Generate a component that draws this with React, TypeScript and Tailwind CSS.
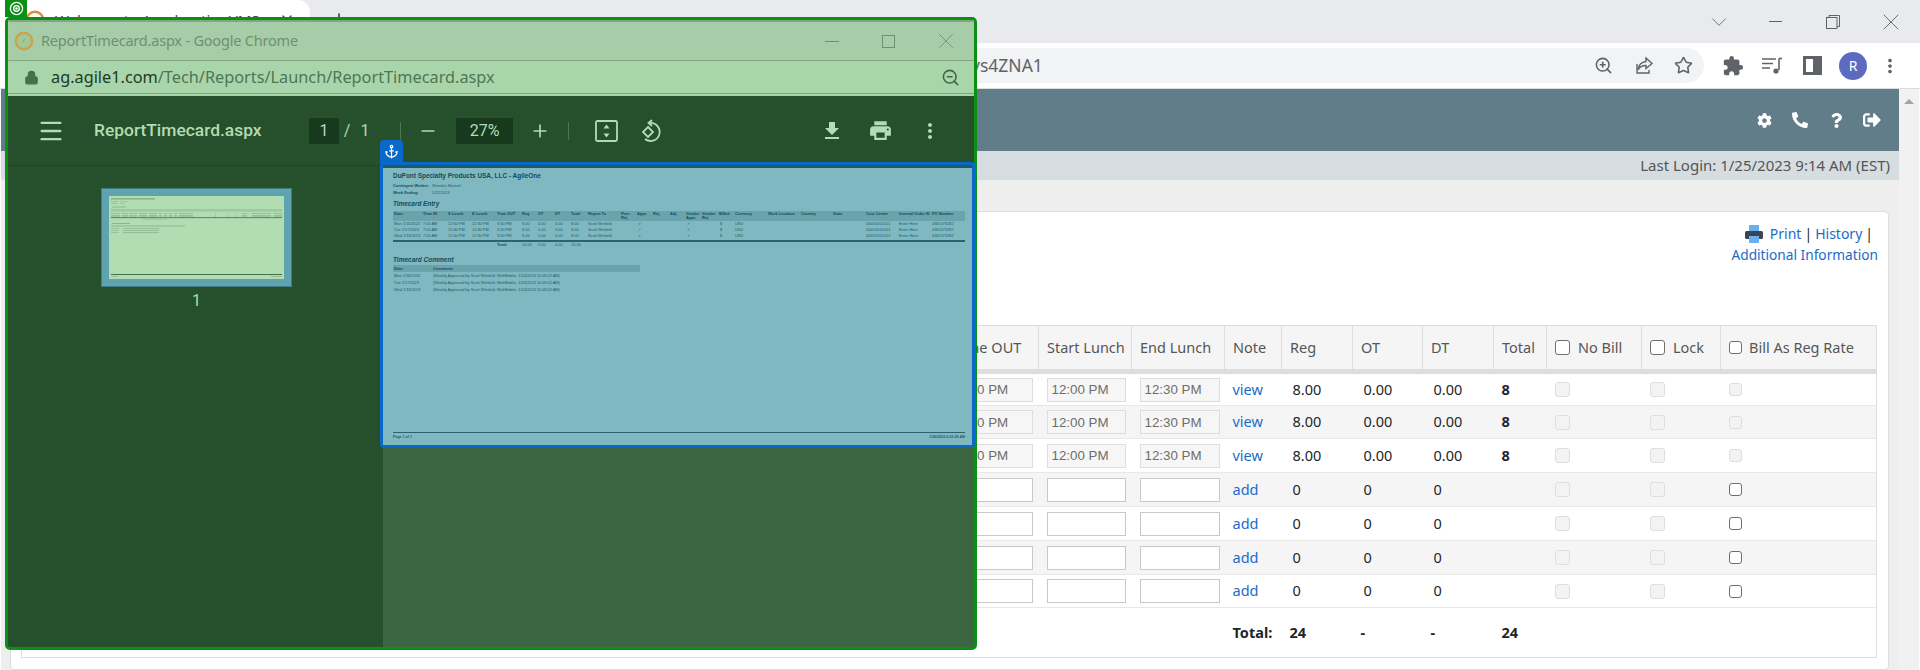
import { Anchor, Lock, Menu, Minus, Plus, Star, X, ZoomIn, ZoomOut, ChevronDown } from 'lucide-react'
import { FaCog, FaPhone, FaQuestion, FaSignOutAlt } from 'react-icons/fa'
import { MdExtension, MdFileDownload, MdMoreVert, MdPrint } from 'react-icons/md'

const rows = [
  { start: '12:00 PM', end: '12:30 PM', out: '3:30 PM', link: 'view', reg: '8.00', ot: '0.00', dt: '0.00', total: '8', locked: true, height: 'h-[34px]', bg: 'bg-white' },
  { start: '12:00 PM', end: '12:30 PM', out: '3:30 PM', link: 'view', reg: '8.00', ot: '0.00', dt: '0.00', total: '8', locked: true, height: 'h-[33px]', bg: 'bg-[#f5f5f5]' },
  { start: '12:00 PM', end: '12:30 PM', out: '3:30 PM', link: 'view', reg: '8.00', ot: '0.00', dt: '0.00', total: '8', locked: true, height: 'h-[34px]', bg: 'bg-white' },
  { start: '', end: '', out: '', link: 'add', reg: '0', ot: '0', dt: '0', total: '', locked: false, height: 'h-[34px]', bg: 'bg-[#f5f5f5]' },
  { start: '', end: '', out: '', link: 'add', reg: '0', ot: '0', dt: '0', total: '', locked: false, height: 'h-[34px]', bg: 'bg-white' },
  { start: '', end: '', out: '', link: 'add', reg: '0', ot: '0', dt: '0', total: '', locked: false, height: 'h-[34px]', bg: 'bg-[#f5f5f5]' },
  { start: '', end: '', out: '', link: 'add', reg: '0', ot: '0', dt: '0', total: '', locked: false, height: 'h-[33px]', bg: 'bg-white' },
]

const docCols = 'grid grid-cols-[29px_25px_24px_25px_25px_16px_17px_16px_17px_33px_16px_16px_17px_16px_16px_17px_16px_33px_33px_32px_33px_33px_33px_33px]'

const docHead = ['Date:', 'Time IN', 'S Lunch', 'E Lunch', 'Time OUT', 'Reg', 'OT', 'DT', 'Total', 'Report To', 'Prev. Rej.', 'Appr.', 'Rej.', 'Adj.', 'Vendor Appr.', 'Vendor Rej', 'Billed', 'Currency', 'Work Location', 'Country', 'State', 'Cost Center', 'Internal Order ID', 'PO Number']

const docRows = [
  { day: 'Mon 1/16/2023', height: 'h-[6px]' },
  { day: 'Tue 1/17/2023', height: 'h-[6px]' },
  { day: 'Wed 1/18/2023', height: 'h-[7px]' },
]

// x, width of the little text smudges in the thumbnail's table rows
const thumbCols = [
  [2, 9], [13, 6], [20, 8], [30, 8], [40, 8], [50, 3], [55, 3], [60, 3], [65, 3], [70, 14],
  [106, 1], [118, 1], [127, 1], [133, 5], [143, 11], [154, 8], [165, 8],
]

function TimeInput({ value, width, locked }: { value: string; width: string; locked: boolean }) {
  return (
    <input
      disabled={locked}
      defaultValue={value}
      className={`${width} h-6 block px-[4px] text-[13.33px] font-['Liberation_Sans',sans-serif] border ${
        locked ? 'bg-[#f6f6f6] border-[#dddddd] text-[#6d6d6d]' : 'bg-white border-[#c8c8c8]'
      }`}
    />
  )
}

function Check({ size, enabled }: { size: string; enabled?: boolean }) {
  return (
    <input
      type="checkbox"
      disabled={!enabled}
      className={`appearance-none block rounded-[3px] ${size} ${
        enabled ? 'bg-white border-[1.5px] border-[#6f6f6f]' : 'bg-[#f3f3f3] border-[1.5px] border-[#dedede]'
      }`}
    />
  )
}

function Thumbnail() {
  return (
    <svg viewBox="0 0 175 83" className="w-[175px] h-[83px] block bg-[#b2dcb2]">
      <rect x="2" y="2.4" width="44" height="1" fill="#6f9c76" />
      <rect x="2" y="5.2" width="7" height="0.8" fill="#93bd97" />
      <rect x="11" y="5.2" width="8" height="0.8" fill="#9ac49e" />
      <rect x="2" y="7.2" width="7" height="0.8" fill="#93bd97" />
      <rect x="11" y="7.2" width="5" height="0.8" fill="#9ac49e" />
      <rect x="3" y="10.5" width="14" height="1" fill="#8bb590" />
      <rect x="2" y="13" width="171" height="2.6" fill="#9fc9a3" />
      {[17, 19, 20.4].map((y) => (
        <g key={y}>
          {thumbCols.map(([x, w]) => (
            <rect key={x} x={x} y={y} width={w} height="0.8" fill="#8fb994" />
          ))}
        </g>
      ))}
      <rect x="2" y="21.3" width="171" height="0.8" fill="#3f7348" />
      <rect x="33" y="22.7" width="25" height="0.8" fill="#93bd97" />
      <rect x="3" y="27" width="18" height="1" fill="#8bb590" />
      <rect x="2" y="29" width="74" height="2" fill="#9fc9a3" />
      {[32, 34, 36].map((y) => (
        <g key={y}>
          <rect x="2" y={y} width="8" height="0.8" fill="#93bd97" />
          <rect x="14" y={y} width="36" height="0.8" fill="#8bb590" />
        </g>
      ))}
      <rect x="2" y="78" width="171" height="0.8" fill="#26592e" />
      <rect x="3" y="80" width="6" height="0.8" fill="#8bb590" />
      <rect x="162" y="80" width="11" height="0.8" fill="#8bb590" />
    </svg>
  )
}

function DocPage() {
  return (
    <div className="h-full bg-[#7fb8c0] pt-[5px] pl-[10px] pr-[7px] pb-[5px] flex flex-col font-['Liberation_Sans',sans-serif] text-[#225c68] text-[3.9px] leading-[6px]">
      <div className="h-[6px] text-[6.45px] font-bold text-[#134c59] whitespace-nowrap">DuPont Specialty Products USA, LLC - AgileOne</div>
      <div className="mt-[4px] flex h-[6.5px] items-center">
        <span className="w-[39px] font-bold text-[#134c59]">Contingent Worker:</span>
        <span>Shenikis Manuel</span>
      </div>
      <div className="flex h-[6.5px] items-center">
        <span className="w-[39px] font-bold text-[#134c59]">Week Ending:</span>
        <span>1/22/2023</span>
      </div>
      <div className="mt-[4px] h-[8px] leading-[8px] text-[6.4px] font-bold italic text-[#134c59]">Timecard Entry</div>
      <div className={`${docCols} mt-[2.5px] h-[10px] bg-[#6aa3ab] font-bold text-[#134c59] leading-[4px] pt-[1px] pl-px`}>
        {docHead.map((h) => (
          <span key={h}>{h}</span>
        ))}
      </div>
      {docRows.map((r) => (
        <div key={r.day} className={`${docCols} ${r.height} items-center pl-px whitespace-nowrap`}>
          <span>{r.day}</span>
          <span>7:00 AM</span>
          <span>12:00 PM</span>
          <span>12:30 PM</span>
          <span>3:30 PM</span>
          <span>8.00</span>
          <span>0.00</span>
          <span>0.00</span>
          <span>8.00</span>
          <span>Scott Winfield</span>
          <span />
          <span className="pl-[1px]">✓</span>
          <span />
          <span />
          <span className="pl-[1px]">✓</span>
          <span />
          <span className="pl-[1px]">$</span>
          <span>USD</span>
          <span />
          <span />
          <span />
          <span>00001010C01</span>
          <span>Enter Here</span>
          <span>4361073282</span>
        </div>
      ))}
      <div className={`${docCols} h-[6px] items-center pl-px border-t-2 border-[#2a626d] whitespace-nowrap`}>
        <span />
        <span />
        <span />
        <span />
        <span className="font-bold text-[#134c59]">Total:</span>
        <span>24.00</span>
        <span>0.00</span>
        <span>0.00</span>
        <span>24.00</span>
      </div>
      <div className="mt-[10px] h-[8px] leading-[8px] text-[6.5px] font-bold italic text-[#134c59]">Timecard Comment</div>
      <div className="mt-[1.5px] w-[247px] h-[7px] bg-[#6aa3ab] flex items-center pl-px font-bold text-[#134c59]">
        <span className="w-[39px]">Date:</span>
        <span>Comments</span>
      </div>
      {docRows.map((r) => (
        <div key={r.day} className="h-[7px] flex items-center pl-px whitespace-nowrap">
          <span className="w-[39px]">{r.day}</span>
          <span>(Weekly Approved by Scott Winfield, WebMobile, 1/24/2023 10:08:02 AM)</span>
        </div>
      ))}
      <div className="mt-auto border-t border-[#2a626d] pt-[1px] flex justify-between h-[8px] font-bold text-[3.6px]">
        <span>Page 1 of 1</span>
        <span>1/26/2023 6:22:28 AM</span>
      </div>
    </div>
  )
}

function ReportWindow() {
  return (
    <div className="absolute left-[5px] top-[17px] w-[972px] h-[633px] border-[3px] border-[#0b8f14] rounded-[5px] bg-[#264f2c] flex flex-col overflow-visible">
      <div className="h-[41px] shrink-0 bg-[#a6cda7] border-t-2 border-t-[#7fa880] border-b border-b-[#7fa880] border-l border-l-[#a6cda7] flex items-center pl-[5px] pr-[15px]">
        <svg viewBox="0 0 20 20" className="w-5 h-5 shrink-0">
          <circle cx="10" cy="10" r="8.2" fill="#a3c69a" stroke="#c8a44a" strokeWidth="2.4" />
          <path d="M11.5 7 L9.3 9.3 L9 12 Z" fill="#b98f3a" />
        </svg>
        <span className="ml-[7px] text-[14.5px] tracking-[-0.2px] text-[#6f9070]">ReportTimecard.aspx - Google Chrome</span>
        <div className="ml-auto flex items-center text-[#6c936f]">
          <div className="w-[14px] h-px bg-[#6c936f]" />
          <div className="ml-[43px] w-[13px] h-[13px] border border-[#6c936f]" />
          <X className="ml-[38px] w-[26px] h-[26px]" strokeWidth={0.8} />
        </div>
      </div>
      <div className="h-[33px] shrink-0 bg-[#a9d5ab] border-b border-[#7fa880] flex items-center pl-[16px] pr-[14px]">
        <Lock className="w-[15px] h-[17px] text-[#47704d] fill-[#47704d]" strokeWidth={2} />
        <span className="ml-[12px] text-[16.3px] text-[#1e3a22]">
          ag.agile1.com<span className="text-[#4f7555]">/Tech/Reports/Launch/ReportTimecard.aspx</span>
        </span>
        <ZoomOut className="ml-auto w-[19px] h-[19px] text-[#3f6645]" strokeWidth={2} />
      </div>
      <div className="h-[2px] shrink-0 bg-[#a9d5ab]" />
      <div className="h-[70px] shrink-0 bg-[#264f2c] border-b border-[#1f4425] flex items-center pl-[29px] pr-[38px] text-[#b2dcb2] font-['Roboto',sans-serif]">
        <Menu className="w-[28px] h-[28px] shrink-0" strokeWidth={2} />
        <span className="ml-[29px] w-[215px] shrink-0 text-[17.4px] font-medium">ReportTimecard.aspx</span>
        <span className="w-[30px] h-[26px] shrink-0 bg-[#173a1e] flex items-center justify-center text-base">1</span>
        <span className="w-4 text-center text-base">/</span>
        <span className="w-5 text-center text-base">1</span>
        <div className="ml-[25px] w-px h-[18px] bg-[#4c7552]" />
        <Minus className="ml-[17px] w-5 h-5" strokeWidth={2} />
        <span className="ml-[18px] w-[57px] h-[26px] shrink-0 bg-[#173a1e] flex items-center justify-center text-base">27%</span>
        <Plus className="ml-[17px] w-5 h-5" strokeWidth={2} />
        <div className="ml-[18px] w-px h-[18px] bg-[#4c7552]" />
        <svg viewBox="0 0 23 22" className="ml-[26px] w-[23px] h-[22px]" fill="none" stroke="currentColor" strokeWidth="1.8">
          <rect x="1" y="1" width="21" height="20" rx="1.5" />
          <path d="M11.5 4.5 L14.5 8.5 H8.5 Z M11.5 17.5 L8.5 13.5 H14.5 Z" fill="currentColor" stroke="none" />
        </svg>
        <svg viewBox="0 0 22 24" className="ml-[22px] w-[22px] h-6" fill="none" stroke="currentColor" strokeWidth="1.8">
          <path d="M10 4 A9 9 0 1 1 5 20" />
          <path d="M12 1 L8.5 4 L12 7" />
          <path d="M8 8 L13 13 L8 18 L3 13 Z" />
        </svg>
        <MdFileDownload className="ml-auto w-6 h-6 -mx-1" />
        <MdPrint className="ml-[28px] w-[25px] h-[25px] -mx-0.5" />
        <MdMoreVert className="ml-[27px] w-6 h-6 -mx-1.5" />
      </div>
      <div className="flex-1 flex min-h-0">
        <div className="w-[375px] shrink-0 flex flex-col items-center pt-[22px] pl-[2px]">
          <div className="w-[191px] p-[7px] bg-[#5fa3b0] border border-[#3f7f82]">
            <Thumbnail />
          </div>
          <span className="mt-[2px] text-[#b2dcb2] text-base font-['Roboto',sans-serif]">1</span>
        </div>
        <div className="flex-1 bg-[#3c6642]" />
      </div>
      {/* selected page highlight */}
      <div className="absolute left-[372px] top-[142px] w-[595px] h-[286px] border-[3px] border-[#0a68c8] rounded-[4px] bg-[#1f5a63] pt-[3px]">
        <DocPage />
        <div className="absolute -left-[3px] -top-[25px] w-[23px] h-[23px] bg-[#0a68c8] rounded-t-[4px] flex items-center justify-center">
          <Anchor className="w-[15px] h-[15px] text-white" strokeWidth={2} />
        </div>
      </div>
      <div className="absolute -left-[3px] -top-[20px] w-[22px] h-[17px] bg-[#0b8f14] flex items-center justify-center overflow-hidden">
        <svg viewBox="0 0 16 16" className="w-[15px] h-[15px]" fill="none" stroke="white" strokeWidth="1.4">
          <circle cx="8" cy="8" r="6.5" />
          <circle cx="8" cy="8" r="3" />
          <circle cx="8" cy="8" r="0.7" fill="white" />
        </svg>
      </div>
    </div>
  )
}

function TimecardTable() {
  const th = 'border border-[#dddddd] border-b-[5px] bg-[#f5f5f5] px-2 text-left font-normal text-[#555555]'
  const td = 'px-2 border-b border-[#e8e8e8]'
  return (
    <table className="table-fixed w-[1856px] border-collapse border border-[#dddddd] text-[14.5px] font-['Noto_Sans',sans-serif] text-[#212529]">
      <colgroup>
        <col />
        <col className="w-[93px]" />
        <col className="w-[93px]" />
        <col className="w-[93px]" />
        <col className="w-[57px]" />
        <col className="w-[71px]" />
        <col className="w-[70px]" />
        <col className="w-[71px]" />
        <col className="w-[53px]" />
        <col className="w-[95px]" />
        <col className="w-[79px]" />
        <col className="w-[156px]" />
      </colgroup>
      <thead>
        <tr className="h-[46px]">
          <th className={th}></th>
          <th className={th}>Time OUT</th>
          <th className={`${th} whitespace-nowrap`}>Start Lunch</th>
          <th className={`${th} whitespace-nowrap`}>End Lunch</th>
          <th className={th}>Note</th>
          <th className={th}>Reg</th>
          <th className={th}>OT</th>
          <th className={th}>DT</th>
          <th className={th}>Total</th>
          <th className={th}>
            <div className="flex items-center gap-2"><Check size="w-[15px] h-[15px]" enabled />No Bill</div>
          </th>
          <th className={th}>
            <div className="flex items-center gap-2"><Check size="w-[15px] h-[15px]" enabled />Lock</div>
          </th>
          <th className={th}>
            <div className="flex items-center gap-[7px] whitespace-nowrap"><Check size="w-[13px] h-[13px]" enabled />Bill As Reg Rate</div>
          </th>
        </tr>
      </thead>
      <tbody>
        {rows.map((row, i) => (
          <tr key={i} className={`${row.height} ${row.bg}`}>
            <td className={td}></td>
            <td className={`${td} pr-[6px]`}><TimeInput value={row.out} width="w-[79px]" locked={row.locked} /></td>
            <td className={`${td} pr-[6px]`}><TimeInput value={row.start} width="w-[79px]" locked={row.locked} /></td>
            <td className={`${td} pr-[4px]`}><TimeInput value={row.end} width="w-[80px]" locked={row.locked} /></td>
            <td className={td}><a className="text-[#1a6cc8]">{row.link}</a></td>
            <td className={`${td} pl-[11px]`}>{row.reg}</td>
            <td className={`${td} pl-[11px]`}>{row.ot}</td>
            <td className={`${td} pl-[11px]`}>{row.dt}</td>
            <td className={`${td} font-bold`}>{row.total}</td>
            <td className={td}><Check size="w-[15px] h-[15px]" /></td>
            <td className={td}><Check size="w-[15px] h-[15px]" /></td>
            <td className={`${td} pl-[8px]`}><Check size="w-[13px] h-[13px]" enabled={!row.locked} /></td>
          </tr>
        ))}
        <tr className="h-[50px] font-bold">
          <td colSpan={4}></td>
          <td className="px-2">Total:</td>
          <td className="px-2">24</td>
          <td className="px-2">-</td>
          <td className="px-2">-</td>
          <td className="px-2">24</td>
          <td colSpan={3}></td>
        </tr>
      </tbody>
    </table>
  )
}

export default function App() {
  return (
    <div className="relative w-[1920px] h-[670px] overflow-hidden bg-white flex flex-col font-['Noto_Sans',sans-serif]">
      {/* browser tab strip */}
      <div className="h-[43px] shrink-0 bg-[#e8eaed] flex">
        <div className="w-[310px] bg-white rounded-tr-xl flex items-center pl-[25px] pr-[15px] pb-[3px]">
          <svg viewBox="0 0 20 20" className="w-5 h-5 shrink-0">
            <circle cx="10" cy="10" r="8.2" fill="white" stroke="#e08a3c" strokeWidth="2.4" />
          </svg>
          <span className="ml-[10px] text-[15px] text-[#45474a] whitespace-nowrap">Welcome to AccelerationVMS</span>
          <X className="ml-auto w-4 h-4 text-[#45474a]" />
        </div>
        <Plus className="ml-[19px] mt-[10px] w-[20px] h-[20px] text-[#45474a]" />
        <div className="ml-auto flex items-center pr-[15px] text-[#5f6368]">
          <ChevronDown className="w-[26px] h-[26px]" strokeWidth={0.8} />
          <div className="ml-[37px] w-[13px] h-px bg-[#5f6368]" />
          <svg viewBox="0 0 14 14" className="ml-[44px] w-[14px] h-[14px]" fill="none" stroke="currentColor" strokeWidth="1">
            <rect x="0.5" y="2.5" width="10.5" height="11" />
            <path d="M3 2.5 V0.5 H13.5 V11.5 H11" />
          </svg>
          <X className="ml-[37px] w-[28px] h-[28px]" strokeWidth={0.8} />
        </div>
      </div>
      {/* browser toolbar */}
      <div className="h-[46px] shrink-0 bg-white border-b border-[#dadce0] flex items-center">
        <div className="ml-[100px] w-[1604px] h-[35px] rounded-full bg-[#f1f3f4] flex items-center pl-[871px] pr-[11px]">
          <span className="text-[17.5px] text-[#5f6368]">ys4ZNA1</span>
          <ZoomIn className="ml-auto w-[19px] h-[19px] text-[#5f6368]" strokeWidth={2} />
          <svg viewBox="0 0 20 20" className="ml-[21px] w-[20px] h-[20px] text-[#5f6368]" fill="none" stroke="currentColor" strokeWidth="1.4">
            <path d="M12 2 L18 7.5 L12 12.5 V9.5 C8 9.5 5.5 11 4 14 C4.5 9.5 7.5 6 12 5.5 Z" />
            <path d="M3 8 V17 H15 V14" />
          </svg>
          <Star className="ml-[20px] w-[19px] h-[19px] text-[#5f6368]" strokeWidth={2} />
        </div>
        <MdExtension className="ml-[18px] w-[22px] h-[22px] text-[#5f6368]" />
        <svg viewBox="0 0 20 18" className="ml-[18px] w-5 h-[18px] text-[#5f6368]" fill="none" stroke="currentColor" strokeWidth="1.6">
          <path d="M0 2 H14 M0 6.5 H11 M0 11 H8" />
          <path d="M17 1.5 V13" />
          <circle cx="14" cy="14" r="2.6" fill="currentColor" stroke="none" />
          <path d="M17 1.5 H20" />
        </svg>
        <div className="ml-[21px] w-[19px] h-[19px] border-[3px] border-[#5f6368] border-r-[9px]" />
        <div className="ml-[17px] w-7 h-7 rounded-full bg-[#5c6bc0] text-white text-sm flex items-center justify-center">R</div>
        <MdMoreVert className="ml-[12px] w-[22px] h-[22px] text-[#5f6368]" />
      </div>
      {/* page */}
      <div className="flex-1 flex min-h-0 pl-px">
        <div className="flex-1 min-w-0 flex flex-col bg-[#eeeeee] overflow-hidden">
          <div className="h-[62px] shrink-0 bg-[#617d89] flex items-center justify-end pr-[18px] text-white">
            <FaCog className="w-[15px] h-[15px]" />
            <FaPhone className="ml-[20px] w-[16px] h-[16px] -scale-x-100" />
            <FaQuestion className="ml-[21px] w-[15px] h-[15px]" />
            <FaSignOutAlt className="ml-[19px] w-[18px] h-[18px]" />
          </div>
          <div className="h-[29px] shrink-0 bg-[#d5dde0] flex items-center justify-end pr-[9px] text-[15px] text-[#555555]">
            Last Login: 1/25/2023 9:14 AM (EST)
          </div>
          <div className="mt-[31px] ml-[9px] mr-[10px] flex-1 bg-white border border-[#dddddd] rounded pl-[10px] pt-[11px]">
            <div className="h-[102px] pr-[10px] text-right text-[14px] leading-[21px] text-[#1a6cc8]">
              <div className="flex items-center justify-end h-[21px] pr-[5px]">
                <svg viewBox="0 0 18 18" className="w-[18px] h-[18px] mr-[7px]">
                  <rect x="4" y="0" width="10" height="6" fill="#6ab0f0" />
                  <rect x="0" y="6" width="18" height="8" rx="1.5" fill="#3c4650" />
                  <rect x="4" y="11" width="10" height="7" fill="#6ab0f0" />
                </svg>
                <span>Print</span>
                <span className="mx-[3px] text-[#212529]">|</span>
                <span>History</span>
                <span className="ml-[3px] text-[#212529]">|</span>
              </div>
              <div className="text-[13.7px]">Additional Information</div>
            </div>
            <TimecardTable />
          </div>
        </div>
        <div className="w-5 shrink-0 bg-[#f1f1f1] flex justify-center pt-[10px] mr-px">
          <div className="w-0 h-0 border-x-[5px] border-x-transparent border-b-[5px] border-b-[#a3a3a3]" />
        </div>
      </div>
      <ReportWindow />
    </div>
  )
}
